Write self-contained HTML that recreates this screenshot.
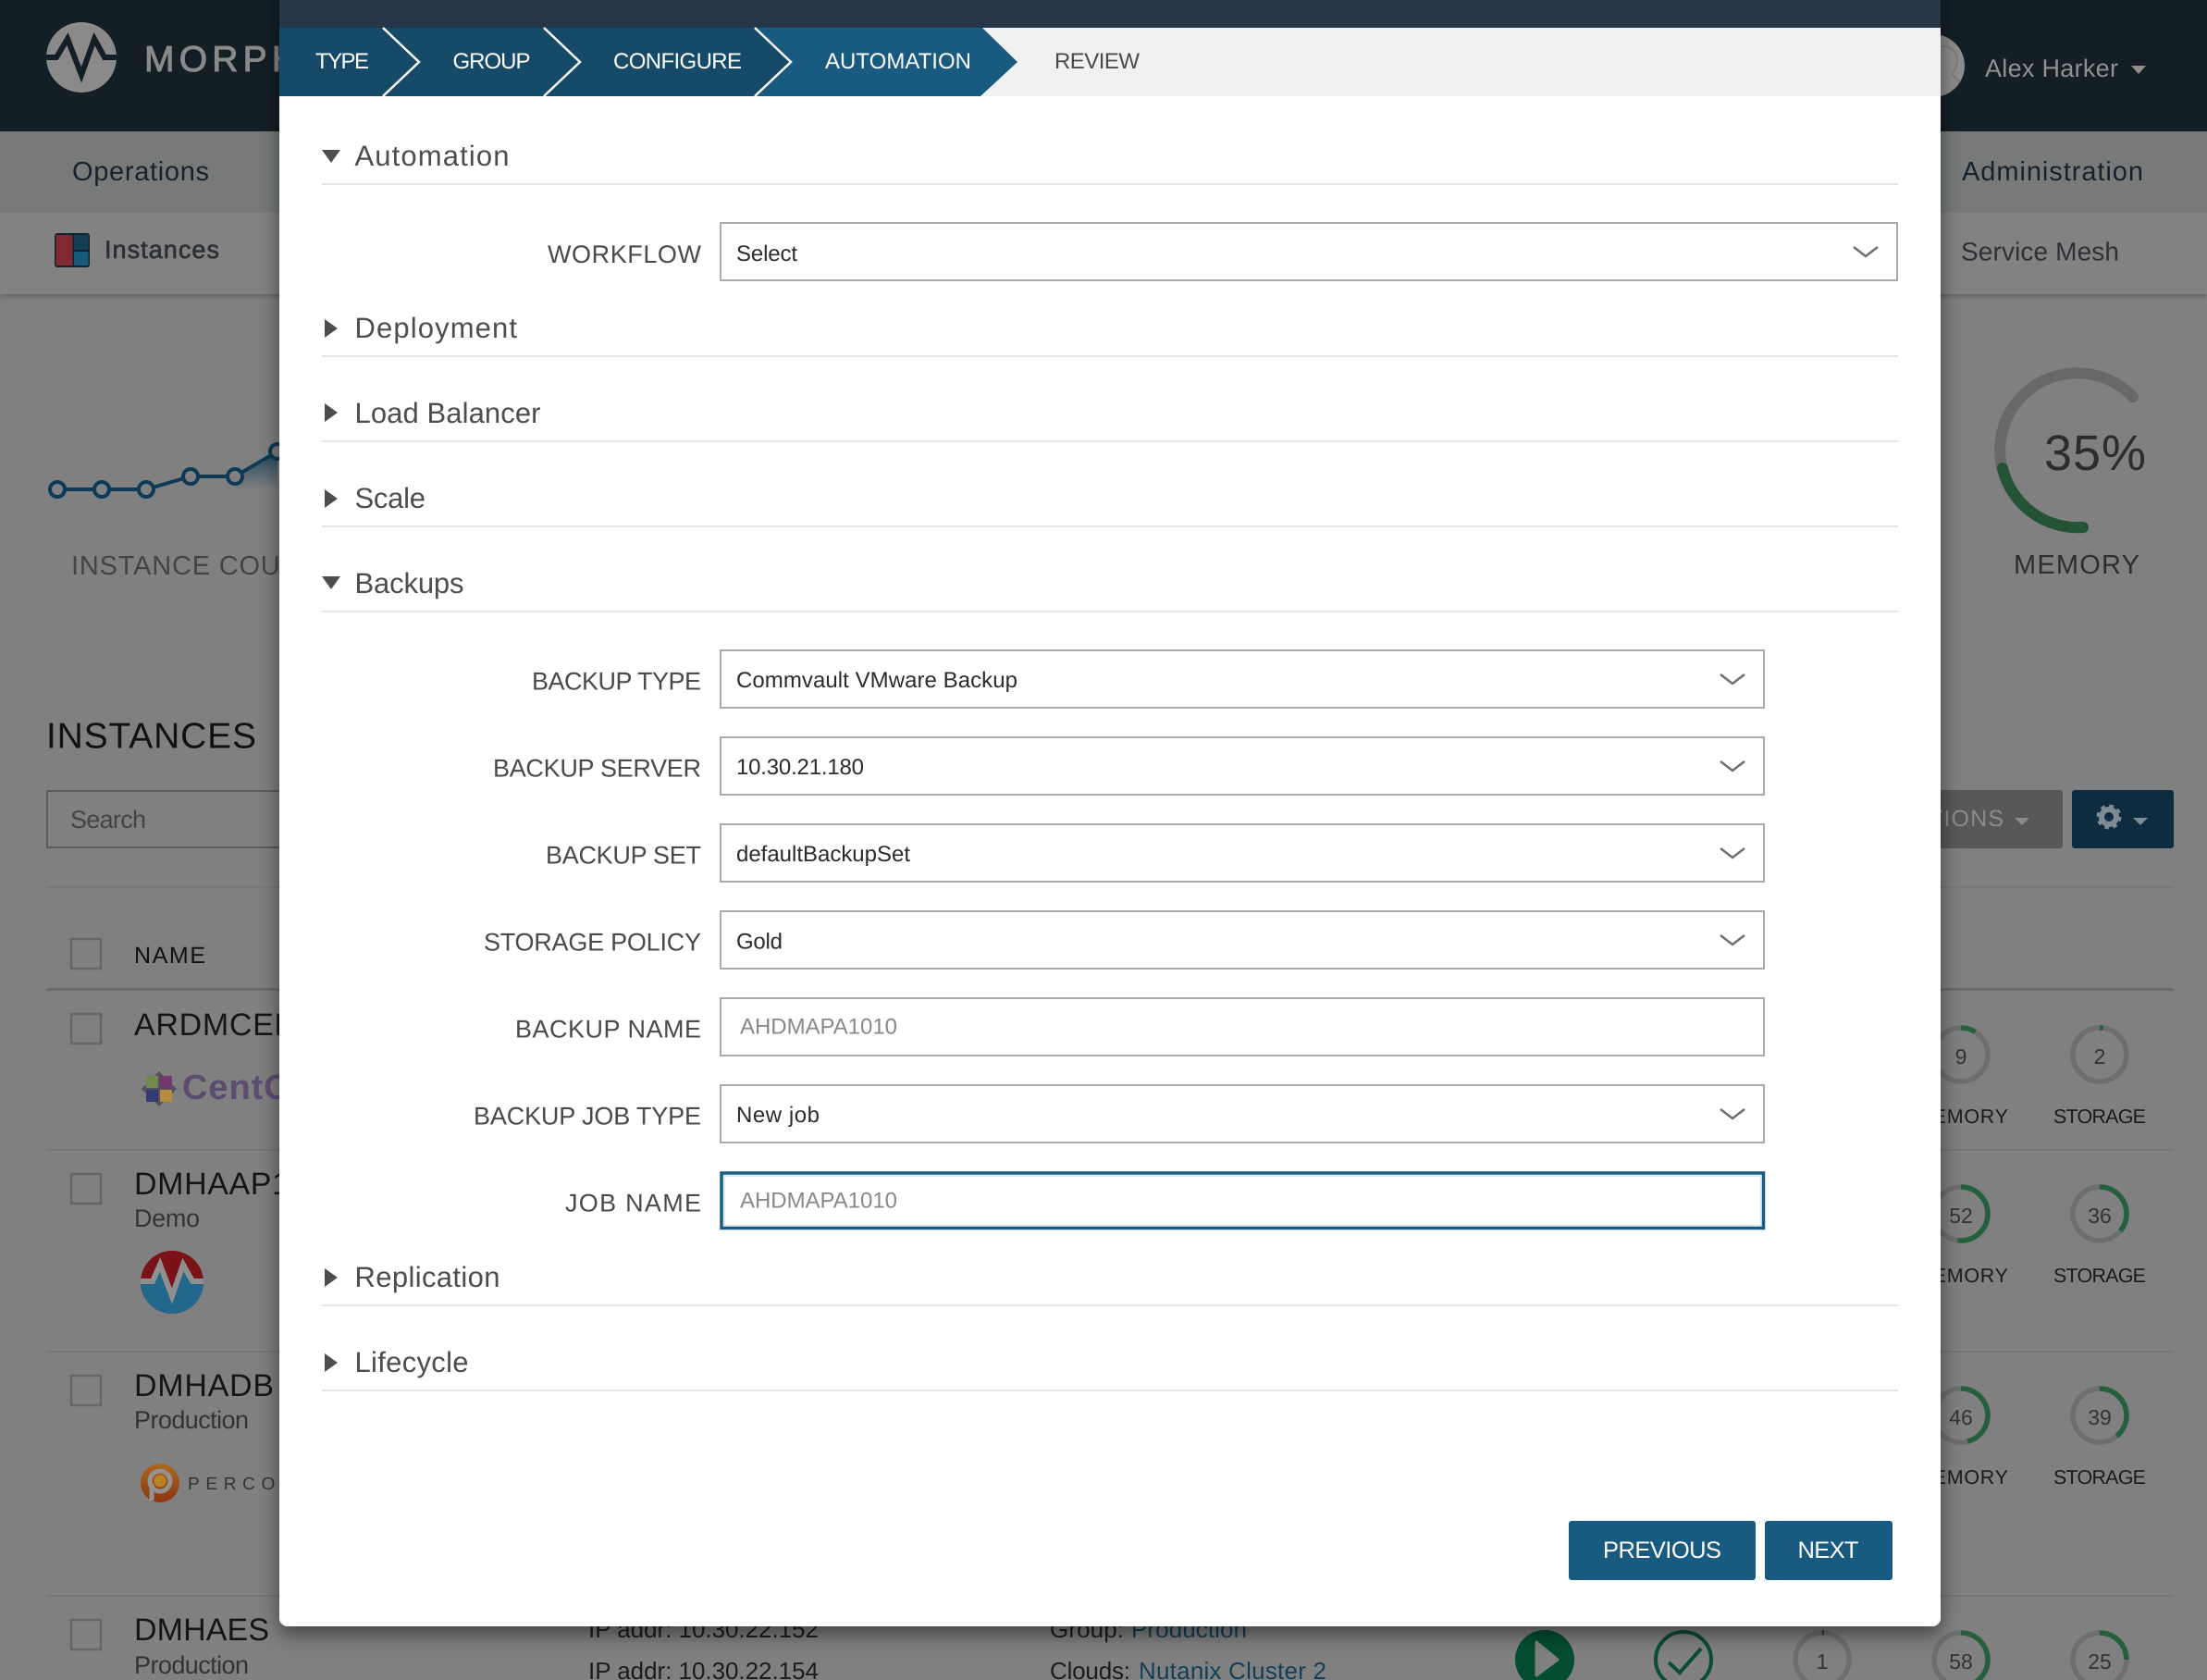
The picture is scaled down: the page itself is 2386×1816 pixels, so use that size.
<!DOCTYPE html>
<html lang="en">
<head>
<meta charset="utf-8">
<title>Morpheus - Instances</title>
<style>
html,body{margin:0;padding:0;width:2386px;height:1816px;overflow:hidden;background:#808080}
svg{display:block;position:absolute;left:0;top:0}
text{font-family:"Liberation Sans",sans-serif;text-rendering:geometricPrecision}
.h{font-size:31px;fill:#4d4d4d}
.l{font-size:27px;fill:#4a4a4a}
.v{font-size:24px;fill:#2b2b2b}
.p{font-size:24px;fill:#888}
.st{font-size:24px;fill:#fff}
.sel{fill:#fff;stroke:#a9a9a9;stroke-width:2}
.chev{fill:none;stroke:#6d6d6d;stroke-width:2.4}
.ln{fill:#e5e5e5}
.tri{fill:#4d4d4d}
.rb{fill:none;stroke:#6e6e6e;stroke-width:5.5}
.ra{fill:none;stroke:#25603c;stroke-width:5.5}
.n{font-size:23px;fill:#333;text-anchor:middle}
.rl{font-size:21.5px;fill:#1a1a1a}
.t{font-size:34px;fill:#151515}
.s{font-size:27px;fill:#333}
.cb{fill:none;stroke:#666;stroke-width:2.5}
.pg{fill:#757575}
.b{font-size:26px;fill:#1c1c1c}
.a{font-size:26px;fill:#123f55}
</style>
</head>
<body>
<svg width="2386" height="1816" viewBox="0 0 2386 1816" xmlns="http://www.w3.org/2000/svg">
<defs>
<filter id="ms" x="-5%" y="-5%" width="110%" height="112%"><feDropShadow dx="0" dy="8" stdDeviation="11" flood-color="#000" flood-opacity=".5"/></filter>
<filter id="ss" x="-2%" y="-20%" width="104%" height="150%"><feDropShadow dx="0" dy="2" stdDeviation="3" flood-color="#000" flood-opacity=".25"/></filter>
<linearGradient id="sp" x1="0" y1="0" x2="0" y2="1"><stop offset="0" stop-color="#0e3a55" stop-opacity=".8"/><stop offset="1" stop-color="#0e3a55" stop-opacity="0"/></linearGradient>
<linearGradient id="pc" x1="0" y1="0" x2="0" y2="1"><stop offset="0" stop-color="#a9691c"/><stop offset="1" stop-color="#8f3512"/></linearGradient>
<clipPath id="mc"><circle cx="186" cy="1386" r="34"/></clipPath>
<clipPath id="hc"><circle cx="88" cy="62" r="38"/></clipPath>
</defs>

<!-- page background -->
<rect width="2386" height="1816" fill="#808080"/>
<rect y="230" width="2386" height="88" fill="#828282" filter="url(#ss)"/>
<rect y="142" width="2386" height="88" fill="#777a79"/>
<rect width="2386" height="142" fill="#131e25"/>

<!-- header -->
<circle cx="88" cy="62" r="38" fill="#8a8a8a"/>
<g clip-path="url(#hc)"><path d="M48 62H61L73 42L88 81L102 42L113 62H128" fill="none" stroke="#131e25" stroke-width="6"/></g>
<text x="156" y="77" font-size="39" fill="#8a8a8a" stroke="#8a8a8a" stroke-width="1" textLength="166" lengthAdjust="spacing">MORPH</text>
<circle cx="2090" cy="71" r="34" fill="#8c8c8c"/>
<path d="M2100 50c10 0 16 7 16 15s-5 12-5 16l8 8M2100 50c-6 0-10 3-12 8" fill="none" stroke="#7b7b7b" stroke-width="2"/>
<text x="2146" y="83" font-size="27" fill="#919191" textLength="144" lengthAdjust="spacing">Alex Harker</text>
<path d="M2304 71h16l-8 9z" fill="#8f8f8f"/>

<!-- nav -->
<text x="78" y="195" font-size="29" fill="#15222c" textLength="148" lengthAdjust="spacing">Operations</text>
<text x="2121" y="195" font-size="29" fill="#15222c" textLength="196" lengthAdjust="spacing">Administration</text>
<rect x="59" y="252" width="38" height="37" rx="3" fill="#12222c"/>
<rect x="60.5" y="254" width="18" height="33" fill="#7f2a30"/>
<rect x="80" y="254" width="15.500" height="16" fill="#123f55"/>
<rect x="80" y="272" width="15.500" height="15" fill="#17597a"/>
<text x="113" y="279" font-size="27" fill="#2d3135" stroke="#2d3135" stroke-width=".7" textLength="124" lengthAdjust="spacing">Instances</text>
<text x="2120" y="281.500" font-size="28" fill="#2d3135" textLength="171" lengthAdjust="spacing">Service Mesh</text>

<!-- sparkline -->
<path d="M254 515L300 488V530H254Z" fill="url(#sp)"/>
<path d="M62 529H158L206 515H254L300 488" fill="none" stroke="#0e3a55" stroke-width="4"/>
<g fill="#808080" stroke="#0e3a55" stroke-width="4">
<circle cx="62" cy="529" r="8"/><circle cx="110" cy="529" r="8"/><circle cx="158" cy="529" r="8"/><circle cx="206" cy="515" r="8"/><circle cx="254" cy="515" r="8"/><circle cx="300" cy="488" r="8"/>
</g>
<text x="77" y="621" font-size="29" fill="#444" textLength="266" lengthAdjust="spacing">INSTANCE COUNT</text>

<!-- gauge -->
<path d="M2306 429A83.500 83.500 0 1 0 2252 570" fill="none" stroke="#686868" stroke-width="12" stroke-linecap="round"/>
<path d="M2165 506A83.500 83.500 0 0 0 2252 570" fill="none" stroke="#235435" stroke-width="12" stroke-linecap="round"/>
<text x="2210" y="508" font-size="54" fill="#2c2c2c" textLength="110" lengthAdjust="spacing">35%</text>
<text x="2177" y="620" font-size="29" fill="#2e2e2e" textLength="136" lengthAdjust="spacing">MEMORY</text>

<!-- instances title -->
<text x="50" y="808.500" font-size="39" fill="#111" textLength="227" lengthAdjust="spacing">INSTANCES</text>
<rect x="51" y="855" width="400" height="61" fill="none" stroke="#5c5c5c" stroke-width="2"/>
<text x="76" y="895" font-size="27" fill="#444" textLength="82" lengthAdjust="spacing">Search</text>
<rect x="2000" y="854" width="230" height="63" rx="3" fill="#585858"/>
<text x="2048" y="893" font-size="25" fill="#8b8b8b" textLength="118" lengthAdjust="spacing">ACTIONS</text>
<path d="M2178 884h16l-8 8z" fill="#8b8b8b"/>
<rect x="2240" y="854" width="110" height="63" rx="3" fill="#0d2c40"/>
<circle cx="2280" cy="883" r="8" fill="none" stroke="#7f8b92" stroke-width="6"/>
<circle cx="2280" cy="883" r="11.500" fill="none" stroke="#7f8b92" stroke-width="4" stroke-dasharray="4.500 4.530"/>
<path d="M2306 884h16l-8 8z" fill="#7f8b92"/>
<rect class="pg" x="50" y="958" width="2300" height="1.500"/>

<!-- table -->
<rect class="cb" x="77" y="1015" width="32" height="32"/>
<text x="145" y="1041" font-size="25" fill="#111" textLength="77" lengthAdjust="spacing">NAME</text>
<rect x="50" y="1068" width="2300" height="3" fill="#6c6c6c"/>

<!-- row 1 -->
<rect class="cb" x="77" y="1096" width="32" height="32"/>
<text class="t" x="145" y="1119" textLength="176" lengthAdjust="spacing">ARDMCEN</text>
<g>
<path d="M172 1158L191 1177L172 1196L153 1177Z" fill="#55505e"/>
<rect x="158" y="1163" width="13" height="13" fill="#6f8a4c"/><rect x="173" y="1163" width="13" height="13" fill="#74386c"/>
<rect x="158" y="1178" width="13" height="13" fill="#333a74"/><rect x="173" y="1178" width="13" height="13" fill="#b58d3c"/>
</g>
<text x="197" y="1188" font-size="38" font-weight="bold" fill="#5d4c70" textLength="144" lengthAdjust="spacing">CentOS</text>
<rect class="pg" x="50" y="1242" width="2300" height="2"/>

<!-- row 2 -->
<rect class="cb" x="77" y="1269" width="32" height="32"/>
<text class="t" x="145" y="1291" textLength="168" lengthAdjust="spacing">DMHAAP1</text>
<text class="s" x="145" y="1326" textLength="71" lengthAdjust="spacing">Demo</text>
<circle cx="186" cy="1386" r="34" fill="#7a1317"/>
<g clip-path="url(#mc)">
<path d="M150 1385H165L173 1367L186 1401L198 1367L208 1385H222V1425H150Z" fill="#22688c"/>
<path d="M150 1385H165L173 1367L186 1401L198 1367L208 1385H222" fill="none" stroke="#8f8f8f" stroke-width="6"/>
</g>
<rect class="pg" x="50" y="1460" width="2300" height="2"/>

<!-- row 3 -->
<rect class="cb" x="77" y="1487" width="32" height="32"/>
<text class="t" x="145" y="1509" textLength="151" lengthAdjust="spacing">DMHADB</text>
<text class="s" x="145" y="1544" textLength="124" lengthAdjust="spacing">Production</text>
<circle cx="173" cy="1603" r="21" fill="url(#pc)"/>
<circle cx="173" cy="1601" r="11" fill="none" stroke="#929292" stroke-width="5"/>
<path d="M164 1604V1622" stroke="#929292" stroke-width="5"/>
<circle cx="173" cy="1601" r="6.500" fill="#b8842a"/>
<text x="203" y="1610" font-size="19" fill="#333" textLength="134" lengthAdjust="spacing">PERCONA</text>
<rect class="pg" x="50" y="1724" width="2300" height="2"/>

<!-- row 4 -->
<rect class="cb" x="77" y="1751" width="32" height="32"/>
<text class="t" x="145" y="1773" textLength="146" lengthAdjust="spacing">DMHAES</text>
<text class="s" x="145" y="1809" textLength="124" lengthAdjust="spacing">Production</text>
<text class="b" x="636" y="1770" textLength="249" lengthAdjust="spacing">IP addr: 10.30.22.152</text>
<text class="b" x="636" y="1815" textLength="249" lengthAdjust="spacing">IP addr: 10.30.22.154</text>
<text class="b" x="1135" y="1770" textLength="80" lengthAdjust="spacing">Group:</text>
<text class="a" x="1223" y="1770" textLength="125" lengthAdjust="spacing">Production</text>
<text class="b" x="1135" y="1815" textLength="87" lengthAdjust="spacing">Clouds:</text>
<text class="a" x="1231" y="1815" textLength="203" lengthAdjust="spacing">Nutanix Cluster 2</text>
<circle cx="1670" cy="1794" r="32" fill="#044d31"/>
<path d="M1661 1775L1684 1794L1661 1811Z" fill="#808080" stroke="#808080" stroke-width="3" stroke-linejoin="round"/>
<circle cx="1820" cy="1794" r="30" fill="none" stroke="#0a4d33" stroke-width="4"/>
<path d="M1804 1797L1816 1808L1839 1782" fill="none" stroke="#0a4d33" stroke-width="4"/>

<!-- rings -->
<g>
<circle class="rb" cx="2120" cy="1140" r="29"/><circle class="ra" cx="2120" cy="1140" r="29" pathLength="100" stroke-dasharray="9 100" transform="rotate(-90 2120 1140)"/>
<circle class="rb" cx="2270" cy="1140" r="29"/><circle class="ra" cx="2270" cy="1140" r="29" pathLength="100" stroke-dasharray="2 100" transform="rotate(-90 2270 1140)"/>
<circle class="rb" cx="2120" cy="1312" r="29"/><circle class="ra" cx="2120" cy="1312" r="29" pathLength="100" stroke-dasharray="52 100" transform="rotate(-90 2120 1312)"/>
<circle class="rb" cx="2270" cy="1312" r="29"/><circle class="ra" cx="2270" cy="1312" r="29" pathLength="100" stroke-dasharray="36 100" transform="rotate(-90 2270 1312)"/>
<circle class="rb" cx="2120" cy="1530" r="29"/><circle class="ra" cx="2120" cy="1530" r="29" pathLength="100" stroke-dasharray="46 100" transform="rotate(-90 2120 1530)"/>
<circle class="rb" cx="2270" cy="1530" r="29"/><circle class="ra" cx="2270" cy="1530" r="29" pathLength="100" stroke-dasharray="39 100" transform="rotate(-90 2270 1530)"/>
<circle class="rb" cx="1970" cy="1794" r="29"/><circle cx="1970" cy="1794" r="29" fill="none" stroke="#333" stroke-width="5.500" pathLength="100" stroke-dasharray="1 100" transform="rotate(-90 1970 1794)"/>
<circle class="rb" cx="2120" cy="1794" r="29"/><circle class="ra" cx="2120" cy="1794" r="29" pathLength="100" stroke-dasharray="58 100" transform="rotate(-90 2120 1794)"/>
<circle class="rb" cx="2270" cy="1794" r="29"/><circle class="ra" cx="2270" cy="1794" r="29" pathLength="100" stroke-dasharray="25 100" transform="rotate(-90 2270 1794)"/>
<text class="n" x="2120" y="1150">9</text><text class="n" x="2270" y="1150">2</text>
<text class="n" x="2120" y="1322">52</text><text class="n" x="2270" y="1322">36</text>
<text class="n" x="2120" y="1540">46</text><text class="n" x="2270" y="1540">39</text>
<text class="n" x="1970" y="1804">1</text><text class="n" x="2120" y="1804">58</text><text class="n" x="2270" y="1804">25</text>
<text class="rl" x="2071" y="1214" textLength="100" lengthAdjust="spacing">MEMORY</text><text class="rl" x="2220" y="1214" textLength="100" lengthAdjust="spacing">STORAGE</text>
<text class="rl" x="2071" y="1386" textLength="100" lengthAdjust="spacing">MEMORY</text><text class="rl" x="2220" y="1386" textLength="100" lengthAdjust="spacing">STORAGE</text>
<text class="rl" x="2071" y="1604" textLength="100" lengthAdjust="spacing">MEMORY</text><text class="rl" x="2220" y="1604" textLength="100" lengthAdjust="spacing">STORAGE</text>
</g>

<!-- modal -->
<rect x="302" y="-30" width="1796" height="1788" rx="9" fill="#fff" filter="url(#ms)"/>
<rect x="302" y="0" width="1796" height="30" fill="#253648"/>
<rect x="302" y="30" width="1796" height="74" fill="#f0f1f3"/>
<path d="M302 30H816L855 67L816 104H302Z" fill="#154a68"/>
<path d="M816 30H1062L1100 67L1060 104H816L855 67Z" fill="#195b80"/>
<path d="M414 30L453 67L414 104M588 30L627 67L588 104M816 30L855 67L816 104" fill="none" stroke="#fff" stroke-width="2.500"/>
<text class="st" x="341" y="74" textLength="58" lengthAdjust="spacing">TYPE</text>
<text class="st" x="489.500" y="74" textLength="84" lengthAdjust="spacing">GROUP</text>
<text class="st" x="663" y="74" textLength="139" lengthAdjust="spacing">CONFIGURE</text>
<text class="st" x="892" y="74" textLength="158" lengthAdjust="spacing">AUTOMATION</text>
<text x="1140" y="74" font-size="24" fill="#4a4a4a" textLength="92" lengthAdjust="spacing">REVIEW</text>

<!-- section heads -->
<path class="tri" d="M348 162H368L358 176Z"/>
<text class="h" x="383.500" y="179" textLength="167" lengthAdjust="spacing">Automation</text>
<rect class="ln" x="348" y="198" width="1704" height="2"/>

<path class="tri" d="M351 345L365 355L351 365Z"/>
<text class="h" x="383.500" y="365" textLength="175.500" lengthAdjust="spacing">Deployment</text>
<rect class="ln" x="348" y="384" width="1704" height="2"/>

<path class="tri" d="M351 436L365 446L351 456Z"/>
<text class="h" x="383.500" y="457" textLength="201" lengthAdjust="spacing">Load Balancer</text>
<rect class="ln" x="348" y="476" width="1704" height="2"/>

<path class="tri" d="M351 529L365 539L351 549Z"/>
<text class="h" x="383.500" y="549" textLength="76.500" lengthAdjust="spacing">Scale</text>
<rect class="ln" x="348" y="568" width="1704" height="2"/>

<path class="tri" d="M348 623H368L358 637Z"/>
<text class="h" x="383.500" y="641" textLength="118" lengthAdjust="spacing">Backups</text>
<rect class="ln" x="348" y="660" width="1704" height="2"/>

<path class="tri" d="M351 1371L365 1381L351 1391Z"/>
<text class="h" x="383.500" y="1391" textLength="157" lengthAdjust="spacing">Replication</text>
<rect class="ln" x="348" y="1410" width="1704" height="2"/>

<path class="tri" d="M351 1463L365 1473L351 1483Z"/>
<text class="h" x="383.500" y="1483" textLength="123" lengthAdjust="spacing">Lifecycle</text>
<rect class="ln" x="348" y="1502" width="1704" height="2"/>

<!-- workflow -->
<text class="l" x="592" y="284" textLength="166" lengthAdjust="spacing">WORKFLOW</text>
<rect class="sel" x="779" y="241" width="1272" height="62"/>
<text class="v" x="796" y="282" textLength="66" lengthAdjust="spacing">Select</text>
<path class="chev" d="M2004 267L2017 277L2030 267"/>

<!-- backups -->
<text class="l" x="575" y="745.500" textLength="183" lengthAdjust="spacing">BACKUP TYPE</text>
<rect class="sel" x="779" y="703" width="1128" height="62"/>
<text class="v" x="796" y="743" textLength="304" lengthAdjust="spacing">Commvault VMware Backup</text>
<path class="chev" d="M1860 729L1873 739L1886 729"/>

<text class="l" x="533" y="839.500" textLength="225" lengthAdjust="spacing">BACKUP SERVER</text>
<rect class="sel" x="779" y="797" width="1128" height="62"/>
<text class="v" x="796" y="837" textLength="138" lengthAdjust="spacing">10.30.21.180</text>
<path class="chev" d="M1860 823L1873 833L1886 823"/>

<text class="l" x="590" y="933.500" textLength="168" lengthAdjust="spacing">BACKUP SET</text>
<rect class="sel" x="779" y="891" width="1128" height="62"/>
<text class="v" x="796" y="931" textLength="188" lengthAdjust="spacing">defaultBackupSet</text>
<path class="chev" d="M1860 917L1873 927L1886 917"/>

<text class="l" x="523" y="1027.500" textLength="235" lengthAdjust="spacing">STORAGE POLICY</text>
<rect class="sel" x="779" y="985" width="1128" height="62"/>
<text class="v" x="796" y="1025.500" textLength="50" lengthAdjust="spacing">Gold</text>
<path class="chev" d="M1860 1011L1873 1021L1886 1011"/>

<text class="l" x="557" y="1121.500" textLength="201" lengthAdjust="spacing">BACKUP NAME</text>
<rect class="sel" x="779" y="1079" width="1128" height="62"/>
<text class="p" x="800" y="1117.500" textLength="170" lengthAdjust="spacing">AHDMAPA1010</text>

<text class="l" x="512" y="1215.500" textLength="246" lengthAdjust="spacing">BACKUP JOB TYPE</text>
<rect class="sel" x="779" y="1173" width="1128" height="62"/>
<text class="v" x="796" y="1213" textLength="90" lengthAdjust="spacing">New job</text>
<path class="chev" d="M1860 1199L1873 1209L1886 1199"/>

<text class="l" x="611" y="1309.500" textLength="147" lengthAdjust="spacing">JOB NAME</text>
<rect x="780" y="1268" width="1126.500" height="59.500" fill="#fff" stroke="#195b80" stroke-width="3.500"/>
<rect x="783" y="1271" width="1121" height="54" fill="none" stroke="#d3e1ea" stroke-width="1.500"/>
<text class="p" x="800" y="1305.500" textLength="170" lengthAdjust="spacing">AHDMAPA1010</text>

<!-- buttons -->
<rect x="1696" y="1644" width="202" height="64" rx="3" fill="#195b80"/>
<text x="1733" y="1684" font-size="25.500" fill="#fff" textLength="128" lengthAdjust="spacing">PREVIOUS</text>
<rect x="1908" y="1644" width="138" height="64" rx="3" fill="#195b80"/>
<text x="1943.500" y="1684" font-size="25.500" fill="#fff" textLength="66" lengthAdjust="spacing">NEXT</text>
</svg>
</body>
</html>
